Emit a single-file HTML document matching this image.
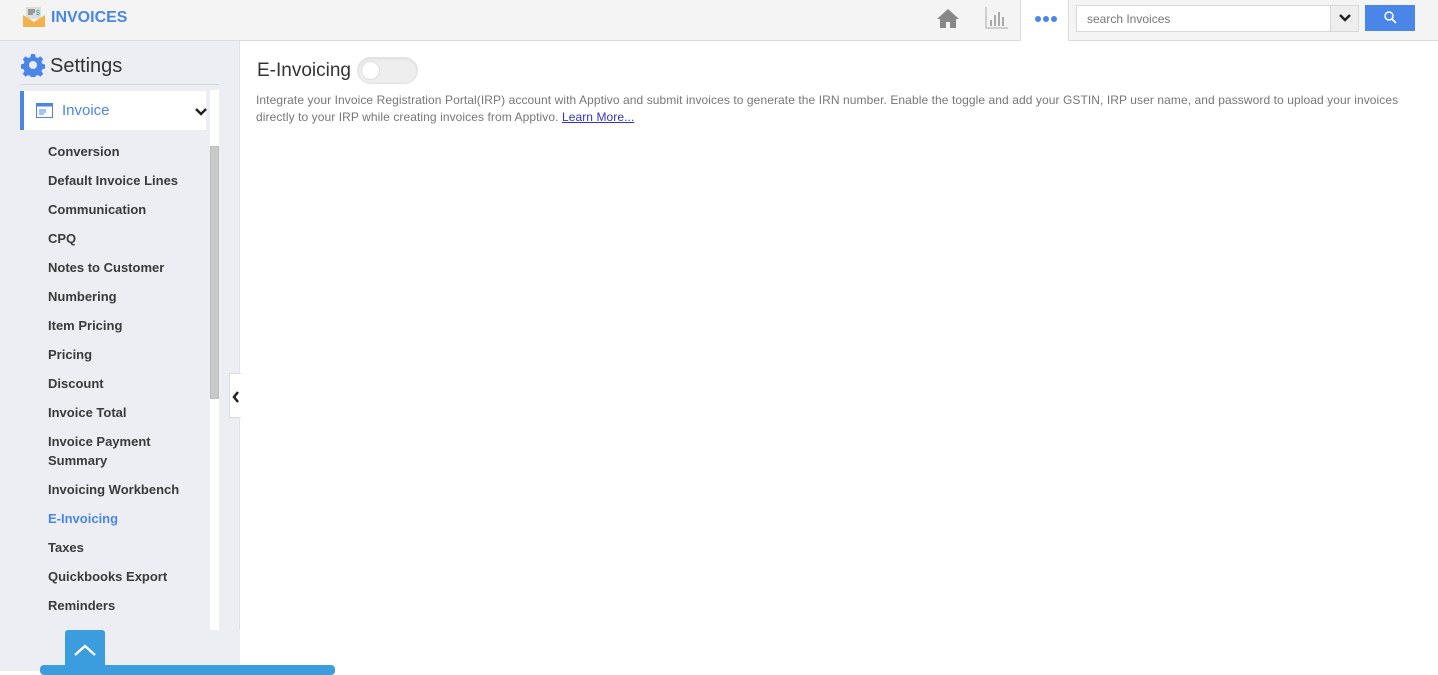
<!DOCTYPE html>
<html><head><meta charset="utf-8"><style>
*{box-sizing:border-box;margin:0;padding:0}
body{width:1438px;height:671px;overflow:hidden;background:#fff;font-family:"Liberation Sans",Arial,sans-serif;position:relative}
.top{position:absolute;left:0;top:0;width:1438px;height:41px;background:#f4f4f4;border-bottom:1px solid #dcdcdc}
.logo{position:absolute;left:51px;top:9px;font-size:16px;font-weight:bold;color:#4a86e8}
.side{position:absolute;left:0;top:41px;width:240px;height:630px;background:#eceef3;border-right:1px solid #e0e2e6}
.set{position:absolute;left:50px;top:55px;font-size:20px;color:#333}
.hr{position:absolute;left:20px;top:84px;width:199px;height:1px;background:#d5d7db}
.inv{position:absolute;left:20px;top:91px;width:186px;height:39px;background:#fff;border-left:4px solid #4a86e8}
.inv span{position:absolute;left:38px;top:11px;color:#4a86e8;font-size:15px}
.item{position:absolute;left:48px;font-size:13px;font-weight:bold;color:#3a3a3a;line-height:19px}
.track{position:absolute;left:210px;top:90px;width:9px;height:540px;background:#fff}
.thumb{position:absolute;left:210px;top:146px;width:9px;height:253px;background:#c9c9c9;border:1px solid #bdbdbd}
</style></head><body>
<div class="top">
<svg style="position:absolute;left:23px;top:7px" width="22" height="20" viewBox="0 0 22 20"><rect x="3" y="0" width="15" height="12" fill="#ddd"/><path d="M5 3h7M5 5h7M5 7h5" stroke="#555" stroke-width="1"/><text x="13" y="8" font-size="7" fill="#2a9" font-family="Liberation Sans">$</text><path d="M0 8l11 7 11-7v12H0z" fill="#f1b24a"/></svg>
<div class="logo">INVOICES</div>
<svg style="position:absolute;left:937px;top:8px" width="22" height="21" viewBox="0 0 22 21"><path d="M11 1L0 11h3v9h6v-6h4v6h6v-9h3z" fill="#888"/></svg>
<svg style="position:absolute;left:985px;top:7px" width="23" height="22" viewBox="0 0 23 22"><path d="M1 0v21h22" stroke="#aaa" fill="none"/><path d="M6 13v6M10 8v11M14 5v14M18 10v9" stroke="#aaa" stroke-width="2"/></svg>
<div style="position:absolute;left:1020px;top:0;width:49px;height:41px;background:#fff;border-left:1px solid #ddd;border-right:1px solid #ddd"></div>
<div style="position:absolute;left:1035px;top:16px;width:22px;height:8px;display:flex;gap:2px"><i style="width:6px;height:6px;border-radius:50%;background:#4a86e8"></i><i style="width:6px;height:6px;border-radius:50%;background:#4a86e8"></i><i style="width:6px;height:6px;border-radius:50%;background:#4a86e8"></i></div>
<div style="position:absolute;left:1076px;top:5px;width:283px;height:27px;background:#fff;border:1px solid #d8d8d8"><span style="position:absolute;left:10px;top:6px;font-size:12px;color:#777">search Invoices</span><div style="position:absolute;right:0;top:0;width:28px;height:25px;background:#eee;border-left:1px solid #d8d8d8"><svg style="position:absolute;left:8px;top:8px" width="12" height="9"><path d="M1 1l5 5 5-5" stroke="#222" stroke-width="2.5" fill="none"/></svg></div></div>
<div style="position:absolute;left:1365px;top:5px;width:50px;height:26px;background:#4a86e8"><svg style="position:absolute;left:19px;top:6px" width="13" height="13"><circle cx="5" cy="5" r="4" stroke="#fff" stroke-width="1.5" fill="none"/><path d="M8 8l4 4" stroke="#fff" stroke-width="1.8"/></svg></div>
</div>
<div class="side">
</div>
<svg style="position:absolute;left:21px;top:53px" width="24" height="24" viewBox="0 0 24 24"><path fill="#4a86e8" d="M10 1h4l.6 3 2.2 1 2.6-1.7 2.8 2.8-1.7 2.6 1 2.2 3 .6v4l-3 .6-1 2.2 1.7 2.6-2.8 2.8-2.6-1.7-2.2 1-.6 3h-4l-.6-3-2.2-1-2.6 1.7-2.8-2.8 1.7-2.6-1-2.2-3-.6v-4l3-.6 1-2.2-1.7-2.6 2.8-2.8 2.6 1.7 2.2-1zM12 8a4 4 0 100 8 4 4 0 000-8z"/></svg>
<div class="set">Settings</div>
<div class="hr"></div>
<div class="track"></div><div class="thumb"></div>
<div class="inv"><svg style="position:absolute;left:12px;top:12px" width="17" height="15"><rect x="0.5" y="0.5" width="16" height="14" fill="none" stroke="#4a86e8"/><rect x="0.5" y="0.5" width="16" height="3" fill="#4a86e8"/><path d="M3 7h7M3 9h7M3 11h5" stroke="#4a86e8"/></svg><span>Invoice</span><svg style="position:absolute;left:171px;top:17px" width="12" height="8"><path d="M1 1l5 5 5-5" stroke="#222" stroke-width="2.5" fill="none"/></svg></div>
<div class="item" style="top:142px">Conversion</div>
<div class="item" style="top:171px">Default Invoice Lines</div>
<div class="item" style="top:200px">Communication</div>
<div class="item" style="top:229px">CPQ</div>
<div class="item" style="top:258px">Notes to Customer</div>
<div class="item" style="top:287px">Numbering</div>
<div class="item" style="top:316px">Item Pricing</div>
<div class="item" style="top:345px">Pricing</div>
<div class="item" style="top:374px">Discount</div>
<div class="item" style="top:403px">Invoice Total</div>
<div class="item" style="top:432px">Invoice Payment<br>Summary</div>
<div class="item" style="top:480px">Invoicing Workbench</div>
<div class="item" style="top:509px;color:#4a86e8">E-Invoicing</div>
<div class="item" style="top:538px">Taxes</div>
<div class="item" style="top:567px">Quickbooks Export</div>
<div class="item" style="top:596px">Reminders</div>
<div style="position:absolute;left:0;top:630px;width:240px;height:41px;background:#eceef3"></div>
<div class="item" style="top:626px;height:4px;overflow:hidden">Custom Email Template</div>
<div style="position:absolute;left:40px;top:665px;width:295px;height:10px;background:#3b9ddd;border-radius:4px"></div>
<div style="position:absolute;left:65px;top:630px;width:40px;height:41px;background:#3b9ddd;border-radius:3px 3px 0 0"><svg style="position:absolute;left:9px;top:14px" width="22" height="12"><path d="M1 11l10-9 10 9" stroke="#fff" stroke-width="2.5" fill="none"/></svg></div>
<div style="position:absolute;left:229px;top:373px;width:12px;height:45px;background:#fff;border:1px solid #ddd;border-right:none"><svg style="position:absolute;left:2px;top:17px" width="8" height="12"><path d="M6 1L2 6l4 5" stroke="#222" stroke-width="2.5" fill="none"/></svg></div>
<div style="position:absolute;left:257px;top:60px;font-size:19px;color:#333">E-Invoicing</div>
<div style="position:absolute;left:357px;top:57px;width:61px;height:27px;border-radius:14px;background:#eee;border:1px solid #e2e2e2;box-shadow:inset 0 1px 2px rgba(0,0,0,.08)"><div style="position:absolute;left:3px;top:3px;width:19px;height:19px;border-radius:50%;background:#fff;border:1px solid #ddd"></div></div>
<div style="position:absolute;left:256px;top:92px;width:1160px;font-size:12px;line-height:17px;color:#777;letter-spacing:0.08px">Integrate your Invoice Registration Portal(IRP) account with Apptivo and submit invoices to generate the IRN number. Enable the toggle and add your GSTIN, IRP user name, and password to upload your invoices directly to your IRP while creating invoices from Apptivo. <span style="color:#3333cc;text-decoration:underline">Learn More...</span></div>
</body></html>
